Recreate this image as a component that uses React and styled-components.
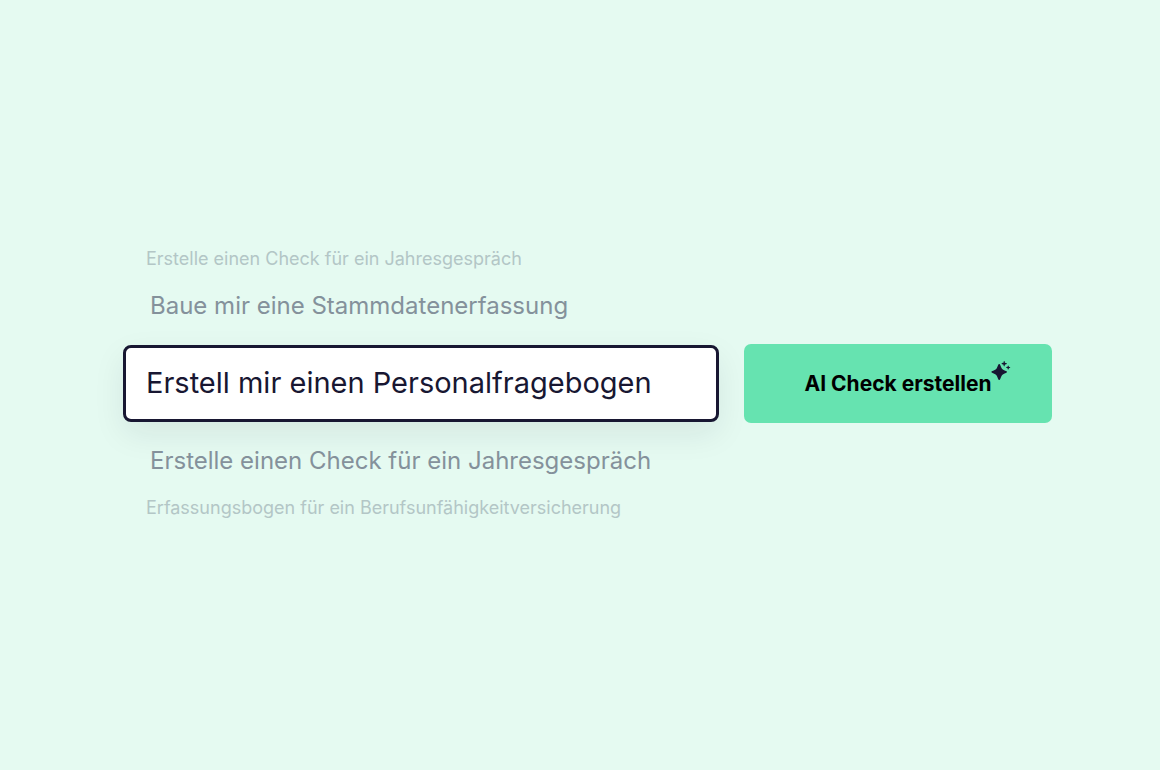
import React, { useState } from 'react'
import styled, { createGlobalStyle } from 'styled-components'

const before = [
  { text: 'Erstelle einen Check für ein Jahresgespräch', far: true },
  { text: 'Baue mir eine Stammdatenerfassung', far: false },
]

const after = [
  { text: 'Erstelle einen Check für ein Jahresgespräch', far: false },
  { text: 'Erfassungsbogen für ein Berufsunfähigkeitversicherung', far: true },
]

function Sparkles() {
  return (
    <SparkleIcon viewBox="0 0 20 20" aria-hidden="true">
      <path d="M8.2 3C9.2 3 9.5 5 10.5 7.1C10.9 7.9 11.4 8.4 12.2 8.8C14.2 9.8 16 10.1 16 11C16 11.9 14.2 12.2 12.2 13.2C11.4 13.6 10.9 14.1 10.5 14.9C9.5 17 9.2 19 8.2 19C7.2 19 6.9 17 5.9 14.9C5.5 14.1 5 13.6 4.2 13.2C2.2 12.2 0.4 11.9 0.4 11C0.4 10.1 2.2 9.8 4.2 8.8C5 8.4 5.5 7.9 5.9 7.1C6.9 5 7.2 3 8.2 3Z" />
      <path d="M13.2 0C13.8 0 13.8 1.5 14 1.8C14.3 2.1 15.9 2.1 15.9 2.7C15.9 3.3 14.3 3.3 14 3.6C13.8 3.9 13.8 5.4 13.2 5.4C12.6 5.4 12.6 3.9 12.4 3.6C12.1 3.3 10.5 3.3 10.5 2.7C10.5 2.1 12.1 2.1 12.4 1.8C12.6 1.5 12.6 0 13.2 0Z" />
      <path d="M17.2 4.4C17.7 4.4 17.7 5.5 17.9 5.8C18.2 6 19.3 6 19.3 6.5C19.3 7 18.2 7 17.9 7.2C17.7 7.5 17.7 8.6 17.2 8.6C16.7 8.6 16.7 7.5 16.5 7.2C16.2 7 15.1 7 15.1 6.5C15.1 6 16.2 6 16.5 5.8C16.7 5.5 16.7 4.4 17.2 4.4Z" />
    </SparkleIcon>
  )
}

export default function App() {
  const [prompt, setPrompt] = useState('Erstell mir einen Personalfragebogen')

  return (
    <Page>
      <GlobalStyle />
      <Form onSubmit={(e) => e.preventDefault()}>
        <Prompts>
          <Suggestions>
            {before.map((item) => (
              <Suggestion key={item.text} $far={item.far}>{item.text}</Suggestion>
            ))}
          </Suggestions>
          <PromptInput
            type="text"
            name="prompt"
            aria-label="Beschreibung für den Check"
            value={prompt}
            onChange={(e) => setPrompt(e.target.value)}
          />
          <Suggestions>
            {after.map((item) => (
              <Suggestion key={item.text} $far={item.far}>{item.text}</Suggestion>
            ))}
          </Suggestions>
        </Prompts>
        <CreateButton type="submit">
          <span>AI Check erstellen</span>
          <Sparkles />
        </CreateButton>
      </Form>
    </Page>
  )
}

const GlobalStyle = createGlobalStyle`
  * {
    box-sizing: border-box;
  }
  body {
    margin: 0;
    background-color: #e5faf1;
    font-family: Inter, "Liberation Sans", sans-serif;
  }
`;

const Page = styled.main`
  min-height: 100vh;
  display: flex;
  align-items: center;
  padding: 0 108px 3px 123px;
`;

const Form = styled.form`
  flex: 1;
  display: grid;
  grid-template-columns: minmax(0, 596fr) minmax(0, 308fr);
  align-items: center;
  gap: 25px;
`;

const Prompts = styled.div`
  display: flex;
  flex-direction: column;
  gap: 23px;
`;

const Suggestions = styled.ul`
  list-style: none;
  margin: 0;
  padding: 0 0 0 23px;
  display: flex;
  flex-direction: column;
  gap: 19px;
`;

const Suggestion = styled.li`
  padding-left: ${({ $far }) => $far ? "0" : "4px"};
  font-size: ${({ $far }) => $far ? "18px" : "24px"};
  line-height: ${({ $far }) => $far ? "24px" : "32px"};
  color: ${({ $far }) => $far ? "#b3c6c6" : "#84919b"};
  white-space: nowrap;
`;

const PromptInput = styled.input`
  width: 100%;
  height: 77px;
  padding: 0 20px 2px;
  border: 3px solid #181732;
  border-radius: 8px;
  background-color: #fff;
  box-shadow: 0 12px 32px rgba(24, 23, 50, 0.08);
  color: #181732;
  font-family: inherit;
  font-size: 29px;
  &:focus{
    outline: none;
  }
`;

const CreateButton = styled.button`
  height: 79px;
  padding: 0 24px;
  display: flex;
  align-items: center;
  justify-content: center;
  border: none;
  border-radius: 7px;
  background-color: #66e3b0;
  color: #000;
  font-family: inherit;
  font-size: 21px;
  font-weight: 700;
  white-space: nowrap;
  cursor: pointer;
`;

const SparkleIcon = styled.svg`
  flex: none;
  width: 20px;
  height: 20px;
  margin: 0 -20px 26px 0;
  fill: #181732;
`;
